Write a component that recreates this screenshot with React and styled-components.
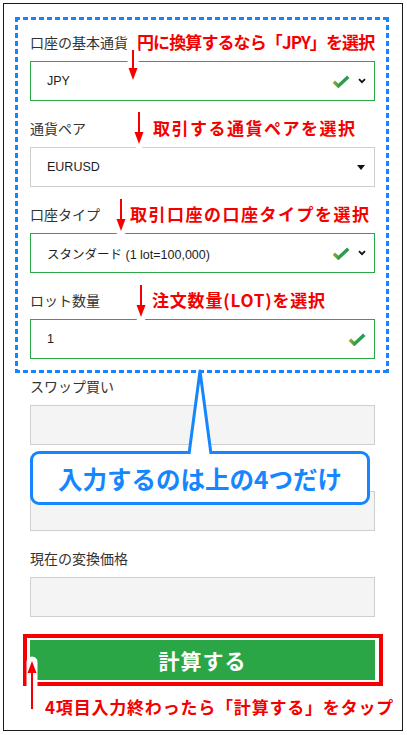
import styled, { createGlobalStyle } from "styled-components";

const GlobalStyle = createGlobalStyle`
  body {
    margin: 0;
    background: #fff;
    font-family: "Liberation Sans", "Noto Sans CJK JP", sans-serif;
  }
`;

const BLUE = "#1686ff";
const RED = "#f40000";
const GREEN = "#2ba646";

const Frame = styled.div`
  position: relative;
  box-sizing: border-box;
  width: 400px;
  height: 728px;
  margin: 3px;
  padding-top: 13px;
  border: 1px solid #1a1a1a;
`;

const FocusGroup = styled.div`
  margin: 0 13px 0 11px;
  padding: 15px 14px 14px 15px;
  background:
    linear-gradient(90deg, ${BLUE} 5px, transparent 5px) top left / 8px 3px repeat-x,
    linear-gradient(90deg, ${BLUE} 5px, transparent 5px) bottom left / 8px 3px repeat-x,
    linear-gradient(${BLUE} 5px, transparent 5px) top left / 3px 8px repeat-y,
    linear-gradient(${BLUE} 5px, transparent 5px) top right / 3px 8px repeat-y;
`;

const Rest = styled.div`
  width: 345px;
  padding: 3px 0 0 26px;
`;

const Field = styled.div`
  position: relative;
  margin-bottom: 17px;

  &:last-child {
    margin-bottom: 0;
  }
`;

const Label = styled.div`
  height: 20px;
  margin-bottom: 9px;
  font-family: "Noto Sans CJK JP", sans-serif;
  font-size: 14px;
  line-height: 20px;
  color: #333;
`;

const Input = styled.div`
  box-sizing: border-box;
  display: flex;
  align-items: center;
  gap: 8px;
  height: 40px;
  padding: 0 8px 0 16px;
  border: 1px solid ${(p) => (p.$valid ? "#2aa845" : "#cfcfcf")};
  background: ${(p) => (p.$disabled ? "#f4f4f4" : "#fff")};
  font-size: 12.5px;
  color: #1d1d1d;
`;

const Value = styled.span`
  flex: 1;
  font-family: "Liberation Sans", "Noto Sans CJK JP", sans-serif;
`;

const Note = styled.div`
  position: absolute;
  top: -1px;
  left: ${(p) => p.$left}px;
  font-family: "Noto Sans CJK JP", sans-serif;
  font-size: 17px;
  font-weight: 700;
  line-height: 22px;
  letter-spacing: ${(p) => p.$spacing ?? 1.5}px;
  color: ${RED};
  white-space: nowrap;
`;

const ArrowWrap = styled.svg`
  position: absolute;
  left: ${(p) => p.$left}px;
  top: ${(p) => p.$top}px;
  overflow: visible;
`;

const ButtonFrame = styled.div`
  position: relative;
  width: 360px;
  box-sizing: border-box;
  margin: 8px 0 0 -7px;
  padding: 2px 4px 2px 3px;
  border: 4px solid ${RED};
`;

const CalcButton = styled.button`
  display: block;
  width: 345px;
  height: 40px;
  border: 0;
  background: ${GREEN};
  color: #fff;
  font-family: "Noto Sans CJK JP", sans-serif;
  font-size: 21px;
  font-weight: 700;
  letter-spacing: 1px;
  cursor: pointer;
`;

const BottomNote = styled.div`
  margin: 9px 0 0 15px;
  font-family: "Noto Sans CJK JP", sans-serif;
  font-size: 17px;
  font-weight: 700;
  line-height: 24px;
  letter-spacing: 0.8px;
  color: ${RED};
  white-space: nowrap;
`;

const Callout = styled.div`
  position: absolute;
  left: 26px;
  top: 447px;
  box-sizing: border-box;
  width: 340px;
  height: 54px;
  display: flex;
  align-items: center;
  justify-content: center;
  border: 3px solid ${BLUE};
  border-radius: 9px;
  background: #fff;
  font-family: "Noto Sans CJK JP", sans-serif;
  font-size: 24.5px;
  font-weight: 700;
  color: ${BLUE};
`;

const Pointer = styled.svg`
  position: absolute;
  left: 147px;
  top: -85px;
  overflow: visible;
`;

function Arrow({ left, top, length, up }) {
  const head = 12;
  const line = up ? `M6 ${head - 2} V${length}` : `M6 0 V${length - head + 2}`;
  const tip = up
    ? `M6 0 L1.5 ${head} L10.5 ${head} Z`
    : `M6 ${length} L1.5 ${length - head} L10.5 ${length - head} Z`;
  return (
    <ArrowWrap $left={left} $top={top} width="12" height={length} viewBox={`0 0 12 ${length}`}>
      <path d={`M6 1 V${length - 1}`} stroke="#fff" strokeWidth="11" strokeLinecap="round" />
      <path d={line} stroke={RED} strokeWidth="2" />
      <path d={tip} fill={RED} />
    </ArrowWrap>
  );
}

function Check() {
  return (
    <svg width="18" height="13" viewBox="0 0 18 13">
      <defs>
        <linearGradient id="chk" x1="0" y1="0" x2="1" y2="0">
          <stop offset="0" stopColor="#8fae2a" />
          <stop offset="0.35" stopColor="#2f9e4a" />
          <stop offset="1" stopColor="#2a9a52" />
        </linearGradient>
      </defs>
      <path d="M1.8 6.8 L6.4 11 L16.3 1.8" fill="none" stroke="url(#chk)" strokeWidth="3.4" strokeLinejoin="miter" />
    </svg>
  );
}

function Chevron() {
  return (
    <svg width="8" height="6" viewBox="0 0 8 6">
      <path d="M1 1.2 L4 4.2 L7 1.2" fill="none" stroke="#111" strokeWidth="1.8" />
    </svg>
  );
}

function Caret() {
  return (
    <svg width="8" height="5" viewBox="0 0 8 5" style={{ marginRight: 1 }}>
      <path d="M0 0 H8 L4 5 Z" fill="#111" />
    </svg>
  );
}

const annotated = [
  {
    label: "口座の基本通貨",
    value: "JPY",
    valid: true,
    select: "chevron",
    note: "円に換算するなら「JPY」を選択",
    noteLeft: 107,
    spacing: -0.9,
    arrow: { left: 97, top: 18, length: 30 },
  },
  {
    label: "通貨ペア",
    value: "EURUSD",
    select: "caret",
    note: "取引する通貨ペアを選択",
    noteLeft: 123,
    arrow: { left: 103, top: -6, length: 32 },
  },
  {
    label: "口座タイプ",
    value: "スタンダード (1 lot=100,000)",
    valid: true,
    select: "chevron",
    note: "取引口座の口座タイプを選択",
    noteLeft: 100,
    arrow: { left: 85, top: -5, length: 32 },
  },
  {
    label: "ロット数量",
    value: "1",
    valid: true,
    note: "注文数量(LOT)を選択",
    noteLeft: 122,
    spacing: 0.8,
    arrow: { left: 105, top: -5, length: 32 },
  },
];

// the second label sits under the callout in the picture
const readonly = [
  { id: "buy", label: "スワップ買い" },
  { id: "sell", label: "" },
  { id: "rate", label: "現在の変換価格" },
];

export default function App() {
  return (
    <>
      <GlobalStyle />
      <Frame>
        <FocusGroup>
          {annotated.map((f) => (
            <Field key={f.label}>
              <Label>{f.label}</Label>
              <Input $valid={f.valid}>
                <Value>{f.value}</Value>
                {f.valid && <Check />}
                {f.select === "chevron" && <Chevron />}
                {f.select === "caret" && <Caret />}
              </Input>
              <Note $left={f.noteLeft} $spacing={f.spacing}>
                {f.note}
              </Note>
              <Arrow {...f.arrow} />
            </Field>
          ))}
        </FocusGroup>
        <Rest>
          {readonly.map((f) => (
            <Field key={f.id}>
              <Label>{f.label}</Label>
              <Input $disabled />
            </Field>
          ))}
          <ButtonFrame>
            <CalcButton>計算する</CalcButton>
            <Arrow left={-1} top={23} length={48} up />
          </ButtonFrame>
          <BottomNote>4項目入力終わったら「計算する」をタップ</BottomNote>
        </Rest>
        <Callout>
          入力するのは上の4つだけ
          <Pointer width="36" height="88" viewBox="0 0 36 88">
            <path d="M9 90 V85 L20 2 L31 85 V90 Z" fill="#fff" />
            <path d="M9 85 L20 2 L31 85" fill="none" stroke={BLUE} strokeWidth="3" strokeLinejoin="round" />
          </Pointer>
        </Callout>
      </Frame>
    </>
  );
}
